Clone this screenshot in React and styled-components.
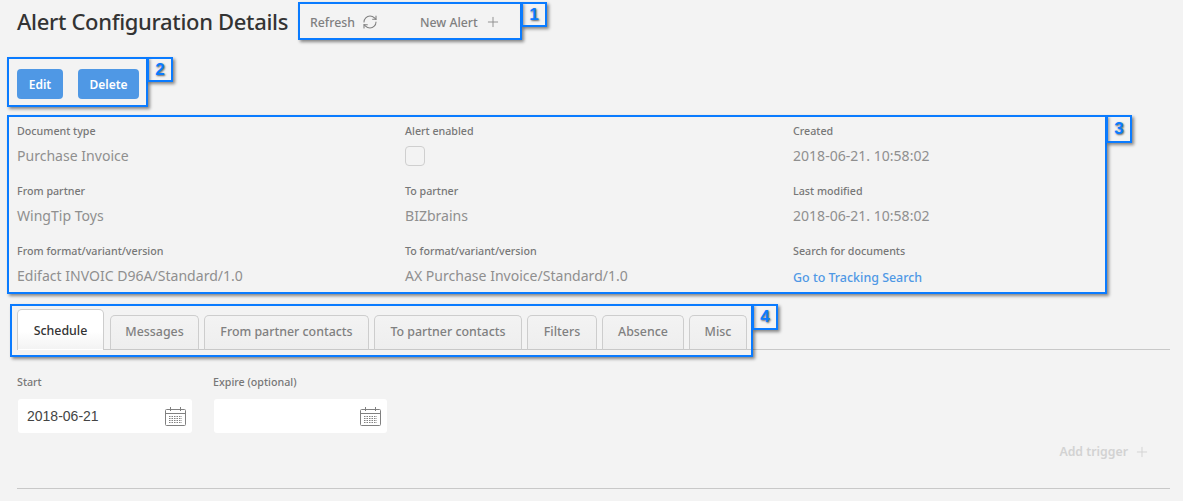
import React from "react";
import styled, { createGlobalStyle } from "styled-components";
import { RefreshCw, Plus } from "lucide-react";

const Global = createGlobalStyle`
  html, body { margin: 0; padding: 0; background: #f3f3f3; }
  body { font-family: "Noto Sans", "Open Sans", sans-serif; overflow: hidden; }
`;

const Page = styled.div`
  position: relative;
  width: 1183px;
  height: 501px;
  box-sizing: border-box;
  padding: 0 13px 0 17px;
`;
const Header = styled.header`
  display: flex;
  align-items: center;
  height: 44px;
`;
const Title = styled.h1`
  margin: 0 0 2px;
  font-size: 22px;
  font-weight: 500;
  color: #333;
  letter-spacing: -0.33px;
  white-space: nowrap;
`;
const Toolbar = styled.div`
  display: flex;
  align-items: center;
  margin-left: 22px;
  gap: 42px;
`;
const ToolAction = styled.span`
  display: flex;
  align-items: center;
  gap: ${p => p.$gap}px;
  font-size: 12.3px;
  font-weight: ${p => p.$disabled ? 600 : 500};
  color: ${p => p.$disabled ? "#d2d2d2" : "#808080"};
  white-space: nowrap;
`;
const Actions = styled.div`
  display: flex;
  gap: 15px;
  margin-top: 25px;
`;
const Btn = styled.button`
  height: 30px;
  width: ${p => p.$w}px;
  padding: 0;
  border: 0;
  border-radius: 4px;
  background: #4f98e5;
  color: #fff;
  font: 600 12px "Noto Sans", sans-serif;
`;
const Details = styled.div`
  display: grid;
  grid-template-columns: 388px 388px 1fr;
  grid-auto-rows: 60px;
  margin-top: 24px;
`;
const Field = styled.div`
  display: flex;
  flex-direction: column;
`;
const Label = styled.div`
  height: 16px;
  font-size: 10.7px;
  line-height: 16px;
  font-weight: 500;
  color: #777;
  white-space: nowrap;
`;
const Value = styled.div`
  margin-top: 7px;
  font-size: 14.05px;
  line-height: 20px;
  color: #8f8f8f;
  white-space: nowrap;
`;
const Link = styled.a`
  margin-top: 9px;
  font-size: 12.45px;
  line-height: 20px;
  font-weight: 500;
  color: #4f98e5;
  white-space: nowrap;
`;
const Check = styled.span`
  display: block;
  margin-top: 7px;
  width: 20px;
  height: 20px;
  box-sizing: border-box;
  border: 1px solid #cfcfcf;
  border-radius: 4px;
  background: #f3f3f3;
`;
const Tabs = styled.div`
  display: flex;
  align-items: flex-end;
  gap: 5px;
  height: 41px;
  margin-top: 5px;
  border-bottom: 1px solid #c8c8c8;
  box-sizing: content-box;
`;
const Tab = styled.div`
  box-sizing: border-box;
  display: flex;
  align-items: center;
  justify-content: center;
  width: ${p => p.$w}px;
  height: ${p => p.$active ? 41 : 35}px;
  margin-right: ${p => p.$active ? 1 : 0}px;
  margin-bottom: -1px;
  padding-top: ${p => p.$active ? 3 : 0}px;
  padding-bottom: 2px;
  border: 1px solid #cdcdcd;
  border-bottom-color: ${p => p.$active ? "transparent" : "#c8c8c8"};
  border-radius: 5px 5px 0 0;
  background: ${p => p.$active ? "linear-gradient(#fff 55%, #f3f3f3)" : "linear-gradient(#f3f3f3, #eeeeee)"};
  color: ${p => p.$active ? "#333" : "#808080"};
  font-size: 12.4px;
  font-weight: 500;
  white-space: nowrap;
`;
const DateRow = styled.div`
  display: flex;
  gap: 21px;
  margin-top: 24px;
`;
const DateField = styled.div`
  display: flex;
  flex-direction: column;
  width: ${p => p.$w}px;
`;
const DateBox = styled.div`
  display: flex;
  align-items: center;
  justify-content: space-between;
  box-sizing: border-box;
  height: 34px;
  margin: 9px 0 0 1px;
  padding: 0 6px 0 9px;
  background: #fff;
  border-radius: 3px;
  font: 14px "Liberation Sans", sans-serif;
  color: #444;
`;
const TriggerRow = styled.div`
  display: flex;
  justify-content: flex-end;
  padding-right: 20px;
  margin-top: 10px;
`;
const Rule = styled.hr`
  margin: 28px 0 0;
  border: 0;
  border-top: 1px solid #c8c8c8;
`;
const Frame = styled.div`
  position: absolute;
  left: ${p => p.$x}px;
  top: ${p => p.$y}px;
  width: ${p => p.$w}px;
  height: ${p => p.$h}px;
  box-sizing: border-box;
  border: 2px solid #0a7bff;
  box-shadow: 2px 2px 3px rgba(0,0,0,.45);
  pointer-events: none;
`;
const Badge = styled(Frame)`
  display: flex;
  align-items: center;
  justify-content: center;
  color: #0a7bff;
  font: 700 17px "Liberation Sans", sans-serif;
  text-shadow: 1px 1px 2px rgba(0,0,0,.6);
`;

const Calendar = () => (
  <svg width="21" height="19" viewBox="0 0 21 19" fill="none" stroke="#808080">
    <rect x="0.5" y="2.5" width="20" height="16" rx="1" />
    <path d="M1 6.5h19M5.5 0v4M15.5 0v4" />
    <path d="M4 9.5h13M4 11.5h13M4 13.5h13M4 15.5h13" strokeDasharray="1.5 1" />
  </svg>
);

const fields = [
  ["Document type", "Purchase Invoice"], ["Alert enabled", null], ["Created", "2018-06-21. 10:58:02"],
  ["From partner", "WingTip Toys"], ["To partner", "BIZbrains"], ["Last modified", "2018-06-21. 10:58:02"],
  ["From format/variant/version", "Edifact INVOIC D96A/Standard/1.0"], ["To format/variant/version", "AX Purchase Invoice/Standard/1.0"],
  ["Search for documents", "link"],
];
const tabs = [["Schedule", 87], ["Messages", 89], ["From partner contacts", 165], ["To partner contacts", 148], ["Filters", 70], ["Absence", 82], ["Misc", 58]];
const frames = [
  [298, 2, 224, 38], [7, 57, 141, 50], [7, 115, 1100, 179], [10, 304, 743, 53],
];
const badges = [
  [521, 2, 26, 25, "1"], [147, 57, 26, 25, "2"], [1106, 115, 26, 28, "3"], [752, 304, 26, 26, "4"],
];

export default function App() {
  return (
    <Page>
      <Global />
      <Header>
        <Title>Alert Configuration Details</Title>
        <Toolbar>
          <ToolAction $gap={7}>Refresh <RefreshCw size={16} strokeWidth={1.6} color="#808080" /></ToolAction>
          <ToolAction $gap={7}>New Alert <Plus size={16} strokeWidth={1.4} color="#8c8c8c" /></ToolAction>
        </Toolbar>
      </Header>
      <Actions>
        <Btn $w={46}>Edit</Btn>
        <Btn $w={61}>Delete</Btn>
      </Actions>
      <Details>
        {fields.map(([l, v]) => (
          <Field key={l}>
            <Label>{l}</Label>
            {v === null ? <Check /> : v === "link" ? <Link>Go to Tracking Search</Link> : <Value>{v}</Value>}
          </Field>
        ))}
      </Details>
      <Tabs>
        {tabs.map(([t, w], i) => <Tab key={t} $w={w} $active={i === 0}>{t}</Tab>)}
      </Tabs>
      <DateRow>
        <DateField $w={175}>
          <Label>Start</Label>
          <DateBox>2018-06-21<Calendar /></DateBox>
        </DateField>
        <DateField $w={174}>
          <Label>Expire (optional)</Label>
          <DateBox><span /><Calendar /></DateBox>
        </DateField>
      </DateRow>
      <TriggerRow>
        <ToolAction $disabled $gap={6}>Add trigger <Plus size={16} strokeWidth={1.4} color="#d2d2d2" /></ToolAction>
      </TriggerRow>
      <Rule />
      {frames.map(([x, y, w, h]) => <Frame key={x + "-" + y} $x={x} $y={y} $w={w} $h={h} />)}
      {badges.map(([x, y, w, h, n]) => <Badge key={n} $x={x} $y={y} $w={w} $h={h}>{n}</Badge>)}
    </Page>
  );
}
